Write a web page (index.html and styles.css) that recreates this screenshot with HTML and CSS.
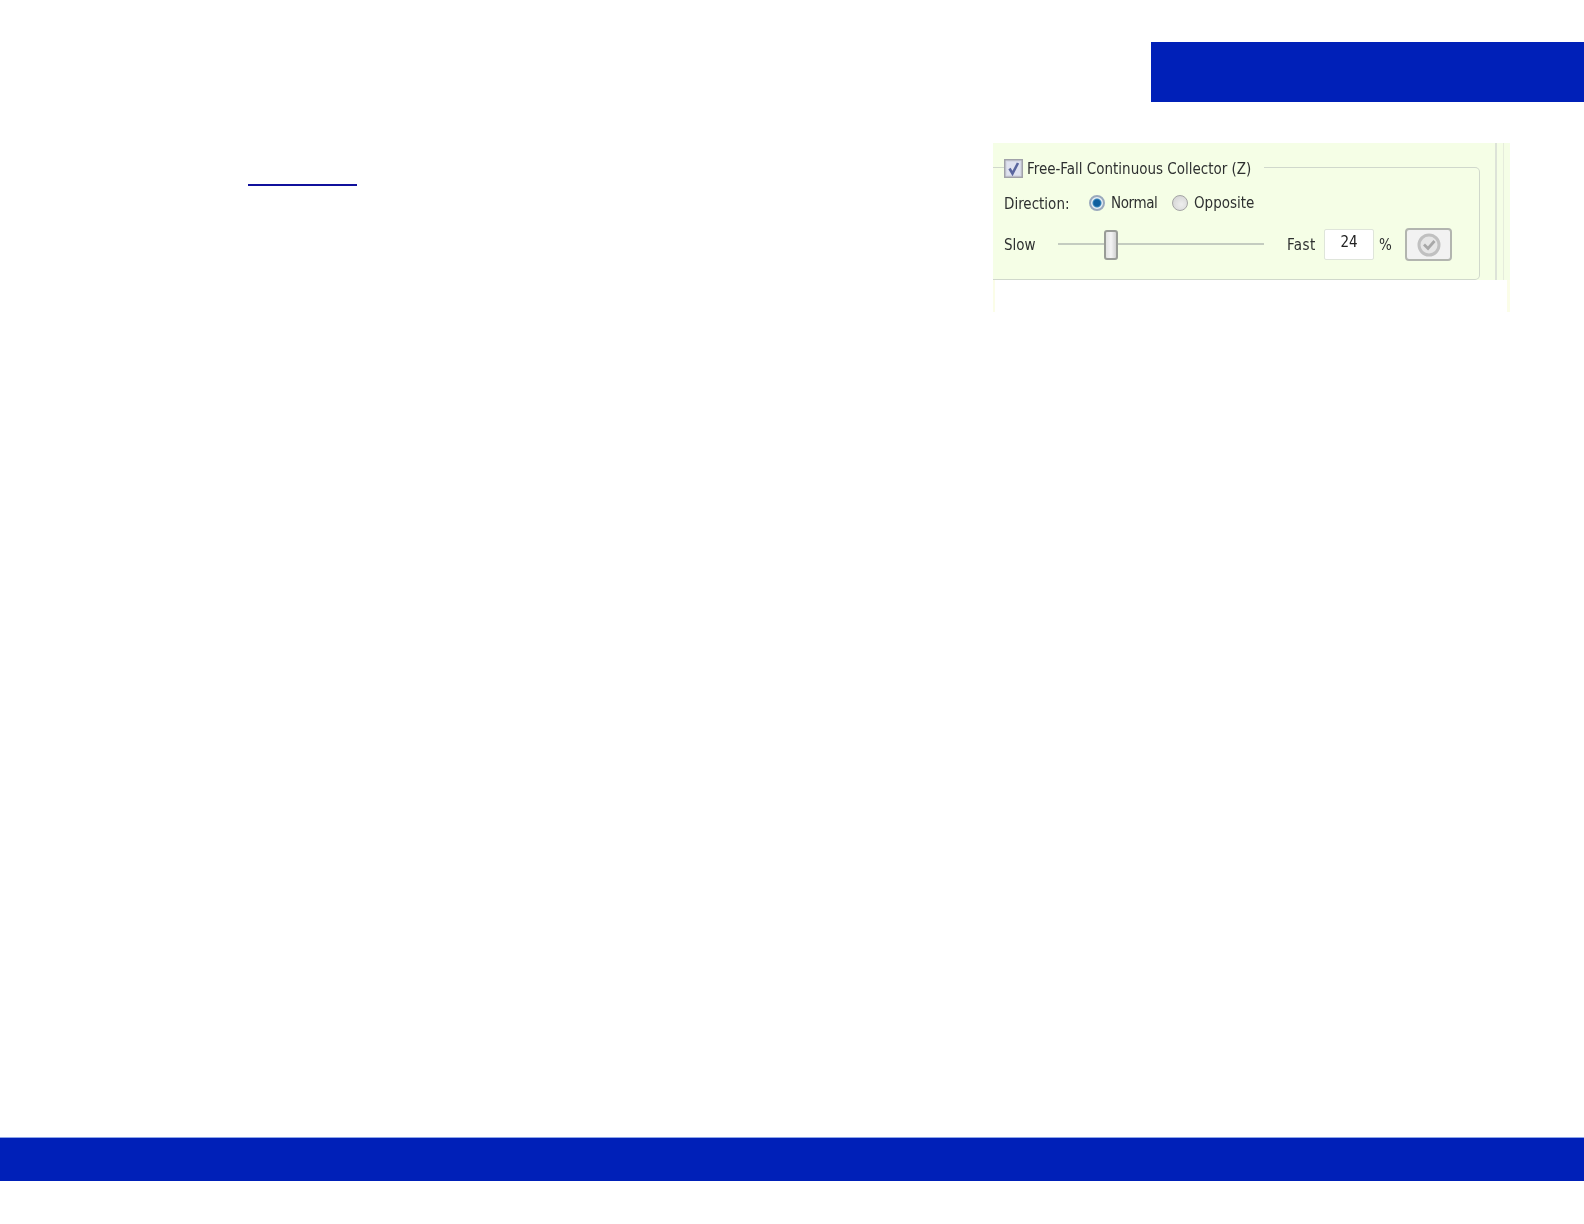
FILE: index.html
```html
<!DOCTYPE html>
<html lang="en">
<head>
<meta charset="utf-8">
<title>Free-Fall Continuous Collector</title>
<link rel="stylesheet" href="styles.css">
</head>
<body>
<div class="page">
  <header class="tab"></header>
  <main class="content">
    <a class="link" href="#" aria-label="link"></a>
    <section class="shot">
      <div class="shot-green">
        <fieldset class="group">
          <legend class="legend">
            <svg class="check" viewBox="0 0 19 19" aria-hidden="true">
              <rect x="0.75" y="0.75" width="17.5" height="17.5" fill="#d6d9e6" stroke="#a0a1a9" stroke-width="1.5"/>
              <rect x="3" y="3" width="13" height="13" fill="#dfe2f0"/>
              <path d="M5.5 9.5 L8.5 14.5 L14 4" fill="none" stroke="#5a669e" stroke-width="2.6"/>
            </svg>
            <span class="legend-text">Free-Fall Continuous Collector (Z)</span>
          </legend>
          <div class="row-direction">
            <span class="dir-label">Direction:</span>
            <span class="radio radio-on"></span>
            <span class="opt opt-normal">Normal</span>
            <span class="radio radio-off"></span>
            <span class="opt">Opposite</span>
          </div>
          <div class="row-speed">
            <span class="slow">Slow</span>
            <div class="slider"><span class="thumb"></span></div>
            <span class="fast">Fast</span>
            <span class="value">24</span>
            <span class="pct">%</span>
            <button class="apply" type="button" aria-label="Apply">
              <svg viewBox="0 0 26 26" width="26" height="26" aria-hidden="true">
                <circle cx="13" cy="13" r="10" fill="#e6e6e6" stroke="#c0c0c0" stroke-width="3"/>
                <path d="M8 12.5 L12 16.5 L18.5 9" fill="none" stroke="#a8a8a8" stroke-width="2.8"/>
              </svg>
            </button>
          </div>
        </fieldset>
        <div class="strip"></div>
      </div>
      <div class="shot-white"></div>
    </section>
  </main>
  <footer class="bar"></footer>
</div>
</body>
</html>
```
FILE: styles.css
```css
html, body {
  margin: 0;
  padding: 0;
  background: #fff;
}
.page {
  width: 1584px;
  height: 1224px;
  display: flex;
  flex-direction: column;
  font-family: "DejaVu Sans", sans-serif;
  font-stretch: condensed;
  font-size: 15px;
  color: #2e3030;
}
.tab {
  margin: 42px 0 0 auto;
  width: 433px;
  height: 60px;
  background: #0020b8;
}
.content {
  display: flex;
  justify-content: space-between;
  align-items: flex-start;
  padding: 41px 74px 0 248px;
  height: 169px;
}
.link {
  display: block;
  width: 109px;
  height: 2px;
  margin-top: 41px;
  background: #10109c;
}
.shot {
  width: 517px;
  display: flex;
  flex-direction: column;
  filter: blur(0.55px);
}
.shot-green {
  display: flex;
  height: 137px;
  background: #f5fee6;
  box-sizing: border-box;
}
.shot-white {
  height: 32px;
  background: #fff;
  border-left: 2px solid #fbfde8;
  border-right: 3px solid #fbfde8;
}
.group {
  width: 487px;
  box-sizing: border-box;
  margin: 15px 0 0;
  padding: 0 0 0 11px;
  height: 122px;
  border: 1px solid #d0d8cc;
  border-left: 0;
  border-radius: 0 5px 5px 0;
  min-width: 0;
}
.legend {
  display: flex;
  align-items: center;
  gap: 4px;
  padding: 0 12px 0 0;
  height: 18px;
  white-space: nowrap;
  width: 248px;
}
.legend-text {
  position: relative;
  top: 2px;
}
.check {
  width: 19px;
  height: 19px;
  flex: none;
  position: relative;
  top: 1px;
}
.row-direction {
  display: flex;
  align-items: center;
  height: 20px;
  margin-top: 17px;
}
.dir-label {
  width: 85px;
  padding-top: 2px;
}
.radio {
  width: 16px;
  height: 16px;
  border-radius: 50%;
  box-sizing: border-box;
  flex: none;
  margin-right: 6px;
}
.radio-on {
  border: 2px solid #9aa9bd;
  background: radial-gradient(circle, #0f5f9e 0 3px, #3a88bd 4px, #e6eef4 5px);
}
.radio-off {
  border: 1px solid #a4a4a4;
  background: radial-gradient(circle at 60% 60%, #eee, #cfcfcf);
}
.opt-normal {
  width: 61px;
  letter-spacing: -0.4px;
}
.row-speed {
  display: flex;
  align-items: center;
  height: 33px;
  margin-top: 15px;
}
.slow {
  width: 54px;
}
.slider {
  position: relative;
  width: 206px;
  height: 2px;
  background: #c4ccc0;
  margin-top: -1px;
}
.thumb {
  position: absolute;
  left: 46px;
  top: -13px;
  width: 14px;
  height: 30px;
  box-sizing: border-box;
  border: 2px solid #999c97;
  border-radius: 3px;
  background: linear-gradient(90deg, #e2e2e2, #f4f4f4 50%, #d2d2d2);
}
.fast {
  margin-left: 23px;
  width: 37px;
  letter-spacing: 0.4px;
}
.value {
  width: 50px;
  height: 31px;
  box-sizing: border-box;
  background: #fff;
  border: 1px solid #dfe5da;
  border-radius: 2px;
  text-align: center;
  line-height: 25px;
  color: #222;
}
.pct {
  margin-left: 5px;
  width: 26px;
}
.apply {
  width: 47px;
  height: 33px;
  padding: 0;
  box-sizing: border-box;
  display: flex;
  align-items: center;
  justify-content: center;
  background: #f2f2f2;
  border: 2px solid #b2b5af;
  border-radius: 4px;
}
.strip {
  width: 9px;
  margin-left: 15px;
  border-left: 2px solid #dde3d8;
  border-right: 1px solid #e6ecdc;
  box-sizing: border-box;
}
.bar {
  margin-top: 825px;
  height: 44px;
  box-sizing: border-box;
  background: #0020b8;
  border-top: 1px solid #8ea6ea;
}
```
